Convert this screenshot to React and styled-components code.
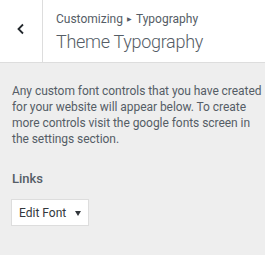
import React from "react";
import styled, { createGlobalStyle } from "styled-components";

const Global = createGlobalStyle`
  html, body { margin: 0; padding: 0; background: #eeeeee; }
  body { font-family: "Roboto", "Open Sans", sans-serif; color: #555d66; }
  * { box-sizing: border-box; }
`;

const Panel = styled.div`
  width: 265px;
  height: 255px;
  background: #eeeeee;
  overflow: hidden;
`;

const Header = styled.div`
  display: flex;
  height: 63px;
  background: #fff;
  border-bottom: 1px solid #dddddd;
`;

const BackButton = styled.button`
  width: 43px;
  flex: none;
  border: none;
  border-right: 1px solid #dddddd;
  background: #fff;
  display: flex;
  align-items: center;
  justify-content: center;
  padding: 0 0 4px 0;
  margin: 0;
  cursor: pointer;
`;

const Titles = styled.div`
  display: flex;
  flex-direction: column;
  padding: 11px 0 0 13px;
`;

const Crumbs = styled.div`
  font-size: 12px;
  line-height: 16px;
  color: #555d66;
`;

const Sep = styled.span`
  font-size: 6px;
  vertical-align: 2px;
  margin: 0 4px;
`;

const Title = styled.h3`
  margin: 4px 0 0 0;
  font-size: 18px;
  line-height: 22px;
  font-weight: 300;
  letter-spacing: -0.3px;
  color: #555d66;
`;

const Body = styled.div`
  padding: 20px 6px 0 12px;
`;

const Description = styled.p`
  margin: 0;
  font-size: 12px;
  line-height: 16px;
  letter-spacing: -0.05px;
  white-space: nowrap;
  color: #555d66;
`;

const Label = styled.div`
  margin-top: 23px;
  font-size: 13px;
  font-weight: 500;
  line-height: 18px;
  color: #555d66;
`;

const Select = styled.div`
  margin-top: 11px;
  margin-left: -1px;
  width: 78px;
  height: 27px;
  background: #fff;
  border: 1px solid #dddddd;
  display: flex;
  align-items: center;
  justify-content: space-between;
  padding: 0 7px 0 7px;
  font-size: 12px;
  color: #32373c;
`;

const Arrow = styled.span`
  width: 0;
  height: 0;
  border-left: 3.5px solid transparent;
  border-right: 3.5px solid transparent;
  border-top: 5px solid #32373c;
  margin-top: 1px;
`;

export default function App() {
  return (
    <>
      <Global />
      <Panel>
        <Header>
          <BackButton aria-label="Back">
            <svg width="10" height="12" viewBox="0 0 10 12">
              <path d="M7 1.5 L2.5 6 L7 10.5" fill="none" stroke="#23282d" strokeWidth="1.8" />
            </svg>
          </BackButton>
          <Titles>
            <Crumbs>
              Customizing<Sep>▶</Sep>Typography
            </Crumbs>
            <Title>Theme Typography</Title>
          </Titles>
        </Header>
        <Body>
          <Description>
            Any custom font controls that you have created
            <br />
            for your website will appear below. To create
            <br />
            more controls visit the google fonts screen in
            <br />
            the settings section.
          </Description>
          <Label>Links</Label>
          <Select>
            Edit Font
            <Arrow />
          </Select>
        </Body>
      </Panel>
    </>
  );
}
